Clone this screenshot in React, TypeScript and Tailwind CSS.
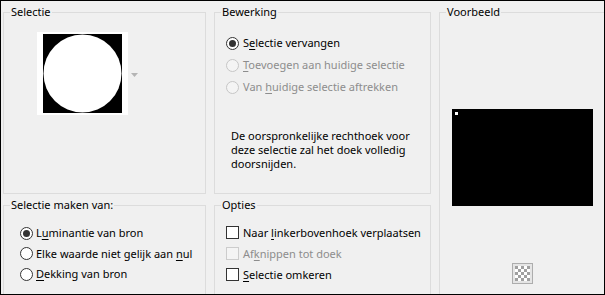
import React from 'react';

const Radio = ({ checked = false, disabled = false }: { checked?: boolean; disabled?: boolean }) => (
    <span
        className={`w-[13px] h-[13px] rounded-full border flex items-center justify-center shrink-0 ${
            disabled ? 'border-[#c6c6c6] bg-[#f4f4f4]' : 'border-[#333] bg-white'
        }`}
    >
        {checked && <span className="w-[7px] h-[7px] rounded-full bg-[#333]" />}
    </span>
);

const Check = ({ disabled = false }: { disabled?: boolean }) => (
    <span
        className={`w-[13px] h-[13px] border shrink-0 ${
            disabled ? 'border-[#cccccc] bg-[#f4f4f4]' : 'border-[#333] bg-white'
        }`}
    />
);

// label with an underlined access key
const Label = ({ pre, key_, post, disabled = false }: { pre: string; key_: string; post: string; disabled?: boolean }) => (
    <span className={`whitespace-nowrap ${disabled ? 'text-[#8d8d8d]' : 'text-black'}`}>
        {pre}
        <span className="underline underline-offset-2">{key_}</span>
        {post}
    </span>
);

const Box = ({ title, className = '', children }: { title: string; className?: string; children?: React.ReactNode }) => (
    <fieldset className={`border border-[#dcdcdc] px-[6px] min-w-0 ${className}`}>
        <legend className="px-[1px] leading-[16px] text-black whitespace-nowrap">{title}</legend>
        {children}
    </fieldset>
);

export default function App() {
    return (
        <div className="w-[605px] h-[295px] border border-black bg-[#f0f0f0] overflow-hidden font-['Segoe_UI','Noto_Sans',sans-serif] text-[11px] leading-[16px] text-black">
            <div className="grid grid-cols-[203px_217px_170px] grid-rows-[190px_100px] gap-x-[8px] gap-y-[3px] pl-[2px] pt-[3px]">

                {/* Selectie */}
                <Box title="Selectie">
                    <div className="flex items-center mt-[12px] ml-[27px]">
                        <div className="w-[91px] h-[83px] bg-white flex items-center justify-center">
                            <svg width="79" height="79" viewBox="0 0 79 79">
                                <rect width="79" height="79" fill="#000" />
                                <circle cx="39.5" cy="39.5" r="39" fill="#fff" />
                            </svg>
                        </div>
                        <svg width="7" height="4" viewBox="0 0 7 4" className="ml-[3px] mt-[2px]">
                            <path d="M0 0 H7 L3.5 4 Z" fill="#b4b4b4" />
                        </svg>
                    </div>
                </Box>

                {/* Bewerking */}
                <Box title="Bewerking">
                    <div className="mt-[12px] ml-[5px] flex flex-col">
                        <div className="h-[22px] flex items-center gap-[4px]">
                            <Radio checked />
                            <Label pre="S" key_="e" post="lectie vervangen" />
                        </div>
                        <div className="h-[22px] flex items-center gap-[4px]">
                            <Radio disabled />
                            <Label pre="" key_="T" post="oevoegen aan huidige selectie" disabled />
                        </div>
                        <div className="h-[22px] flex items-center gap-[4px]">
                            <Radio disabled />
                            <Label pre="Van " key_="h" post="uidige selectie aftrekken" disabled />
                        </div>
                    </div>
                    <p className="mt-[31px] ml-[10px] leading-[14px] whitespace-nowrap">
                        De oorspronkelijke rechthoek voor
                        <br />
                        deze selectie zal het doek volledig
                        <br />
                        doorsnijden.
                    </p>
                </Box>

                {/* Voorbeeld */}
                <Box title="Voorbeeld" className="row-span-2 border-r-0 flex flex-col">
                    <div className="mt-[89px] ml-[6px] w-[141px] h-[97px] bg-black p-[3px]">
                        <div className="w-[3px] h-[3px] bg-white" />
                    </div>
                    <div className="mt-[57px] ml-[66px] w-[21px] h-[21px] border border-[#adadad] bg-[#e5e5e5] flex items-center justify-center">
                        <svg width="15" height="15" viewBox="0 0 15 15">
                            <rect width="15" height="15" fill="#fff" />
                            <path d="M0 0h3v3H0zM6 0h3v3H6zM12 0h3v3h-3zM3 3h3v3H3zM9 3h3v3H9zM0 6h3v3H0zM6 6h3v3H6zM12 6h3v3h-3zM3 9h3v3H3zM9 9h3v3H9zM0 12h3v3H0zM6 12h3v3H6zM12 12h3v3h-3z" fill="#a0a0a0" />
                        </svg>
                    </div>
                </Box>

                {/* Selectie maken van */}
                <Box title="Selectie maken van:">
                    <div className="mt-[10px] ml-[10px] flex flex-col">
                        <div className="h-[20.5px] flex items-center gap-[3px]">
                            <Radio checked />
                            <Label pre="L" key_="u" post="minantie van bron" />
                        </div>
                        <div className="h-[20.5px] flex items-center gap-[3px]">
                            <Radio />
                            <Label pre="Elke waarde niet gelijk aan " key_="n" post="ul" />
                        </div>
                        <div className="h-[20.5px] flex items-center gap-[3px]">
                            <Radio />
                            <Label pre="" key_="D" post="ekking van bron" />
                        </div>
                    </div>
                </Box>

                {/* Opties */}
                <Box title="Opties">
                    <div className="mt-[9px] ml-[5px] flex flex-col">
                        <div className="h-[21px] flex items-center gap-[4px]">
                            <Check />
                            <Label pre="Naar " key_="l" post="inkerbovenhoek verplaatsen" />
                        </div>
                        <div className="h-[21px] flex items-center gap-[4px]">
                            <Check disabled />
                            <Label pre="Af" key_="k" post="nippen tot doek" disabled />
                        </div>
                        <div className="h-[21px] flex items-center gap-[4px]">
                            <Check />
                            <Label pre="" key_="S" post="electie omkeren" />
                        </div>
                    </div>
                </Box>
            </div>
        </div>
    );
}
